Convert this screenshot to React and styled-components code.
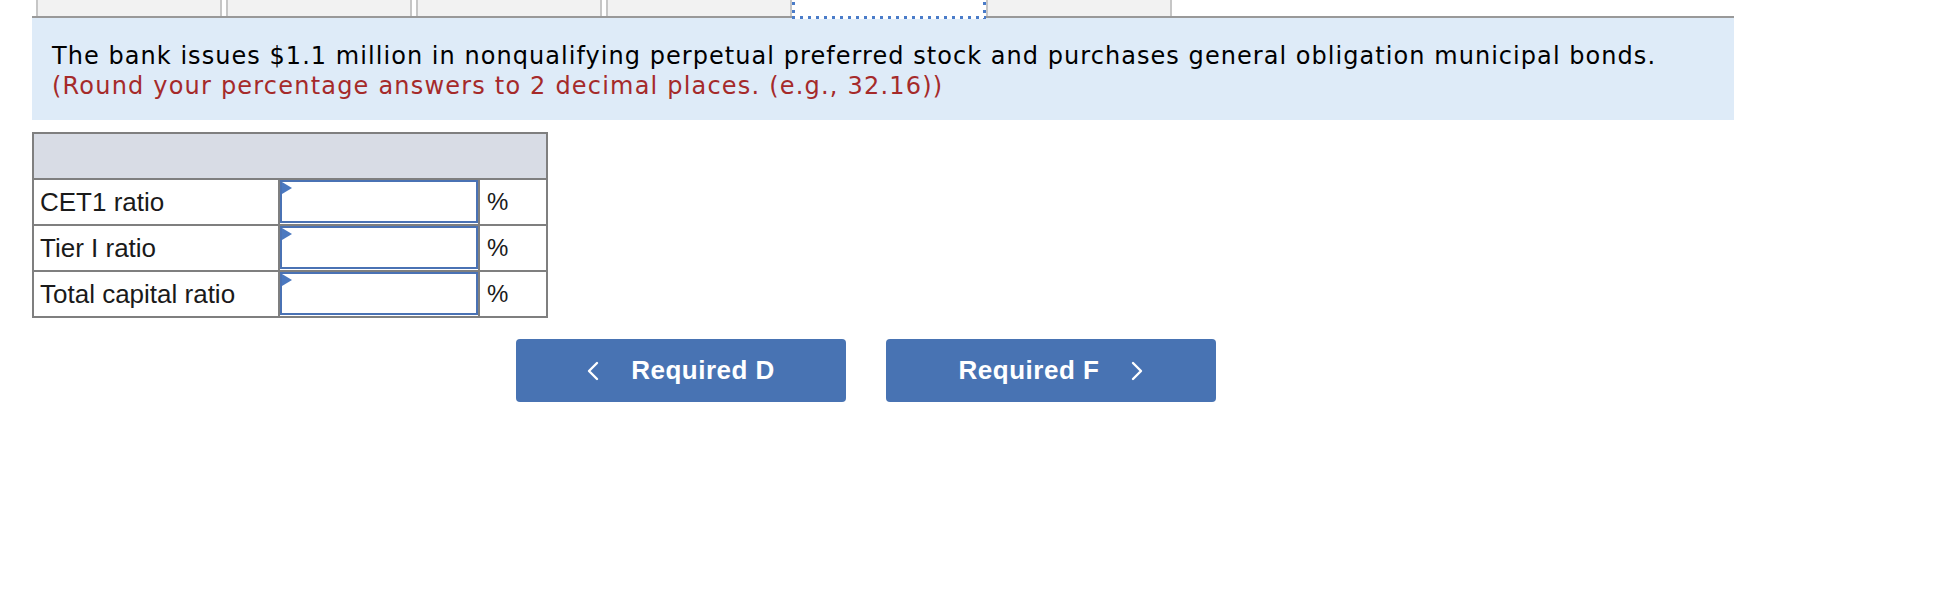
import React from 'react';
import styled, { createGlobalStyle } from 'styled-components';

const Global = createGlobalStyle`
  html, body { margin: 0; padding: 0; background: #ffffff; }
  body { font-family: "Liberation Sans", Arial, sans-serif; }
`;

const Page = styled.div`
  width: 1702px;
  margin-left: 32px;
`;

const TabStrip = styled.div`
  display: flex;
  gap: 4px;
  padding-left: 4px;
  height: 16px;
  border-bottom: 2px solid #999999;
`;

const Tab = styled.div`
  box-sizing: border-box;
  flex: none;
  width: 186px;
  height: 16px;
  background: #f2f2f2;
  border-left: 2px solid #c6c6c6;
  border-right: 2px solid #c6c6c6;
`;

const ActiveTab = styled.div`
  box-sizing: border-box;
  flex: none;
  position: relative;
  z-index: 1;
  width: 194px;
  height: 19px;
  margin: 0 -4px -3px;
  background-color: #ffffff;
  background-image:
    linear-gradient(to right, #4a7cc9 3px, transparent 3px),
    linear-gradient(to bottom, #4a7cc9 3px, transparent 3px),
    linear-gradient(to bottom, #4a7cc9 3px, transparent 3px);
  background-size: 8px 3px, 3px 8px, 3px 8px;
  background-position: 0 bottom, left 2px, right 2px;
  background-repeat: repeat-x, repeat-y, repeat-y;
`;

const Prompt = styled.div`
  background: #deebf8;
  padding: 23px 20px 19px;
  font-family: "DejaVu Sans", Verdana, sans-serif;
  font-size: 24px;
  letter-spacing: 1.05px;
  line-height: 30px;
  color: #000000;
`;

const Hint = styled.div`
  color: #a52a2a;
  letter-spacing: 1.2px;
`;

const Grid = styled.div`
  display: grid;
  grid-template-columns: 244px 198px 66px;
  grid-auto-rows: 44px;
  gap: 2px;
  padding: 2px;
  width: max-content;
  margin-top: 12px;
  background: #7f7f7f;
`;

const HeaderCell = styled.div`
  grid-column: 1 / -1;
  background: #d8dce5;
`;

const LabelCell = styled.div`
  display: flex;
  align-items: center;
  padding-left: ${p => p.$pad}px;
  background: #ffffff;
  font-family: "Liberation Sans", Arial, sans-serif;
  font-size: ${p => p.$size}px;
  color: #1a1a1a;
`;

const InputCell = styled.div`
  position: relative;
  background: #ffffff;
`;

const Field = styled.input`
  box-sizing: border-box;
  display: block;
  width: 100%;
  height: 43px;
  margin: 0;
  padding: 0 8px;
  border: 2px solid #4a72b4;
  background: #ffffff;
  font-family: "Liberation Sans", Arial, sans-serif;
  font-size: 22px;
  outline: none;
`;

const Marker = styled.svg`
  position: absolute;
  left: 2px;
  top: 2px;
  pointer-events: none;
`;

const NavRow = styled.div`
  display: flex;
  gap: 40px;
  margin-top: 21px;
  padding-left: 484px;
`;

const NavButton = styled.button`
  box-sizing: border-box;
  width: 330px;
  height: 63px;
  display: flex;
  align-items: center;
  justify-content: center;
  gap: 32px;
  padding: 0;
  border: none;
  border-radius: 4px;
  background: #4873b3;
  color: #ffffff;
  font-family: "Liberation Sans", Arial, sans-serif;
  font-weight: 700;
  font-size: 26px;
  letter-spacing: 0.5px;
  cursor: pointer;
`;

const Chevron = ({ dir }) => (
  <svg width="12" height="20" viewBox="0 0 12 20" aria-hidden="true">
    <polyline
      points={dir === 'left' ? '10,2 2,10 10,18' : '2,2 10,10 2,18'}
      fill="none"
      stroke="#ffffff"
      strokeWidth="2.4"
      strokeLinecap="round"
      strokeLinejoin="round"
    />
  </svg>
);

const rows = ['CET1 ratio', 'Tier I ratio', 'Total capital ratio'];

export default function App() {
  return (
    <Page>
      <Global />
      <TabStrip>
        <Tab />
        <Tab />
        <Tab />
        <Tab />
        <ActiveTab />
        <Tab />
      </TabStrip>
      <Prompt>
        <div>
          The bank issues $1.1 million in nonqualifying perpetual preferred stock and purchases general obligation municipal bonds.
        </div>
        <Hint>(Round your percentage answers to 2 decimal places. (e.g., 32.16))</Hint>
      </Prompt>
      <Grid>
        <HeaderCell />
        {rows.map((label) => (
          <React.Fragment key={label}>
            <LabelCell $pad={6} $size={26}>{label}</LabelCell>
            <InputCell>
              <Field type="text" aria-label={label} />
              <Marker width="10" height="12" viewBox="0 0 10 12">
                <polygon points="0,0 10,6 0,12" fill="#4a78c0" />
              </Marker>
            </InputCell>
            <LabelCell $pad={7} $size={24}>%</LabelCell>
          </React.Fragment>
        ))}
      </Grid>
      <NavRow>
        <NavButton>
          <Chevron dir="left" />
          <span>Required D</span>
        </NavButton>
        <NavButton>
          <span>Required F</span>
          <Chevron dir="right" />
        </NavButton>
      </NavRow>
    </Page>
  );
}
